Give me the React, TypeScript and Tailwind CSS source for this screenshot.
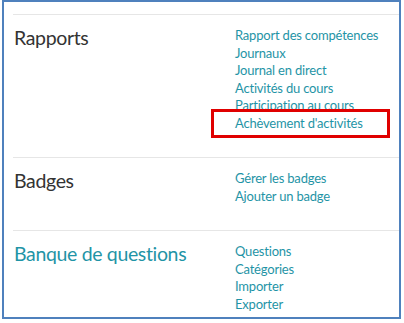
const sections = [
  {
    title: "Rapports",
    accent: false,
    links: [
      "Rapport des compétences",
      "Journaux",
      "Journal en direct",
      "Activités du cours",
      "Participation au cours",
      "Achèvement d'activités",
    ],
  },
  {
    title: "Badges",
    accent: false,
    links: ["Gérer les badges", "Ajouter un badge"],
  },
  {
    title: "Banque de questions",
    accent: true,
    links: ["Questions", "Catégories", "Importer", "Exporter"],
  },
]

export default function App() {
  return (
    <div className="w-[404px] h-[323px] bg-white relative" style={{ fontFamily: "Lato, 'Open Sans', sans-serif" }}>
      <div className="ml-[2px] w-[399px] h-[319px] border-2 border-[#4f81bd] overflow-hidden pt-[12px] pl-[9px]">
        {sections.map((s) => (
          <section key={s.title} className="flex border-t border-[#e6e6e6] pt-[12px] pb-[25px]">
            <div className="w-[222px] shrink-0">
              <h2
                className={
                  "text-[19.5px] leading-[22px] tracking-[-0.35px] pl-px " +
                  (s.accent ? "text-[#1f94a6]" : "text-[#333333]")
                }
              >
                {s.title}
              </h2>
            </div>
            <ul className="text-[13px] leading-[17.5px] tracking-[-0.2px] text-[#1f94a6]">
              {s.links.map((l) => (
                <li key={l}>{l}</li>
              ))}
            </ul>
          </section>
        ))}
      </div>
      <div className="absolute left-[211px] top-[109px] w-[179px] h-[29px] border-[3px] border-[#e00000]" />
    </div>
  )
}
